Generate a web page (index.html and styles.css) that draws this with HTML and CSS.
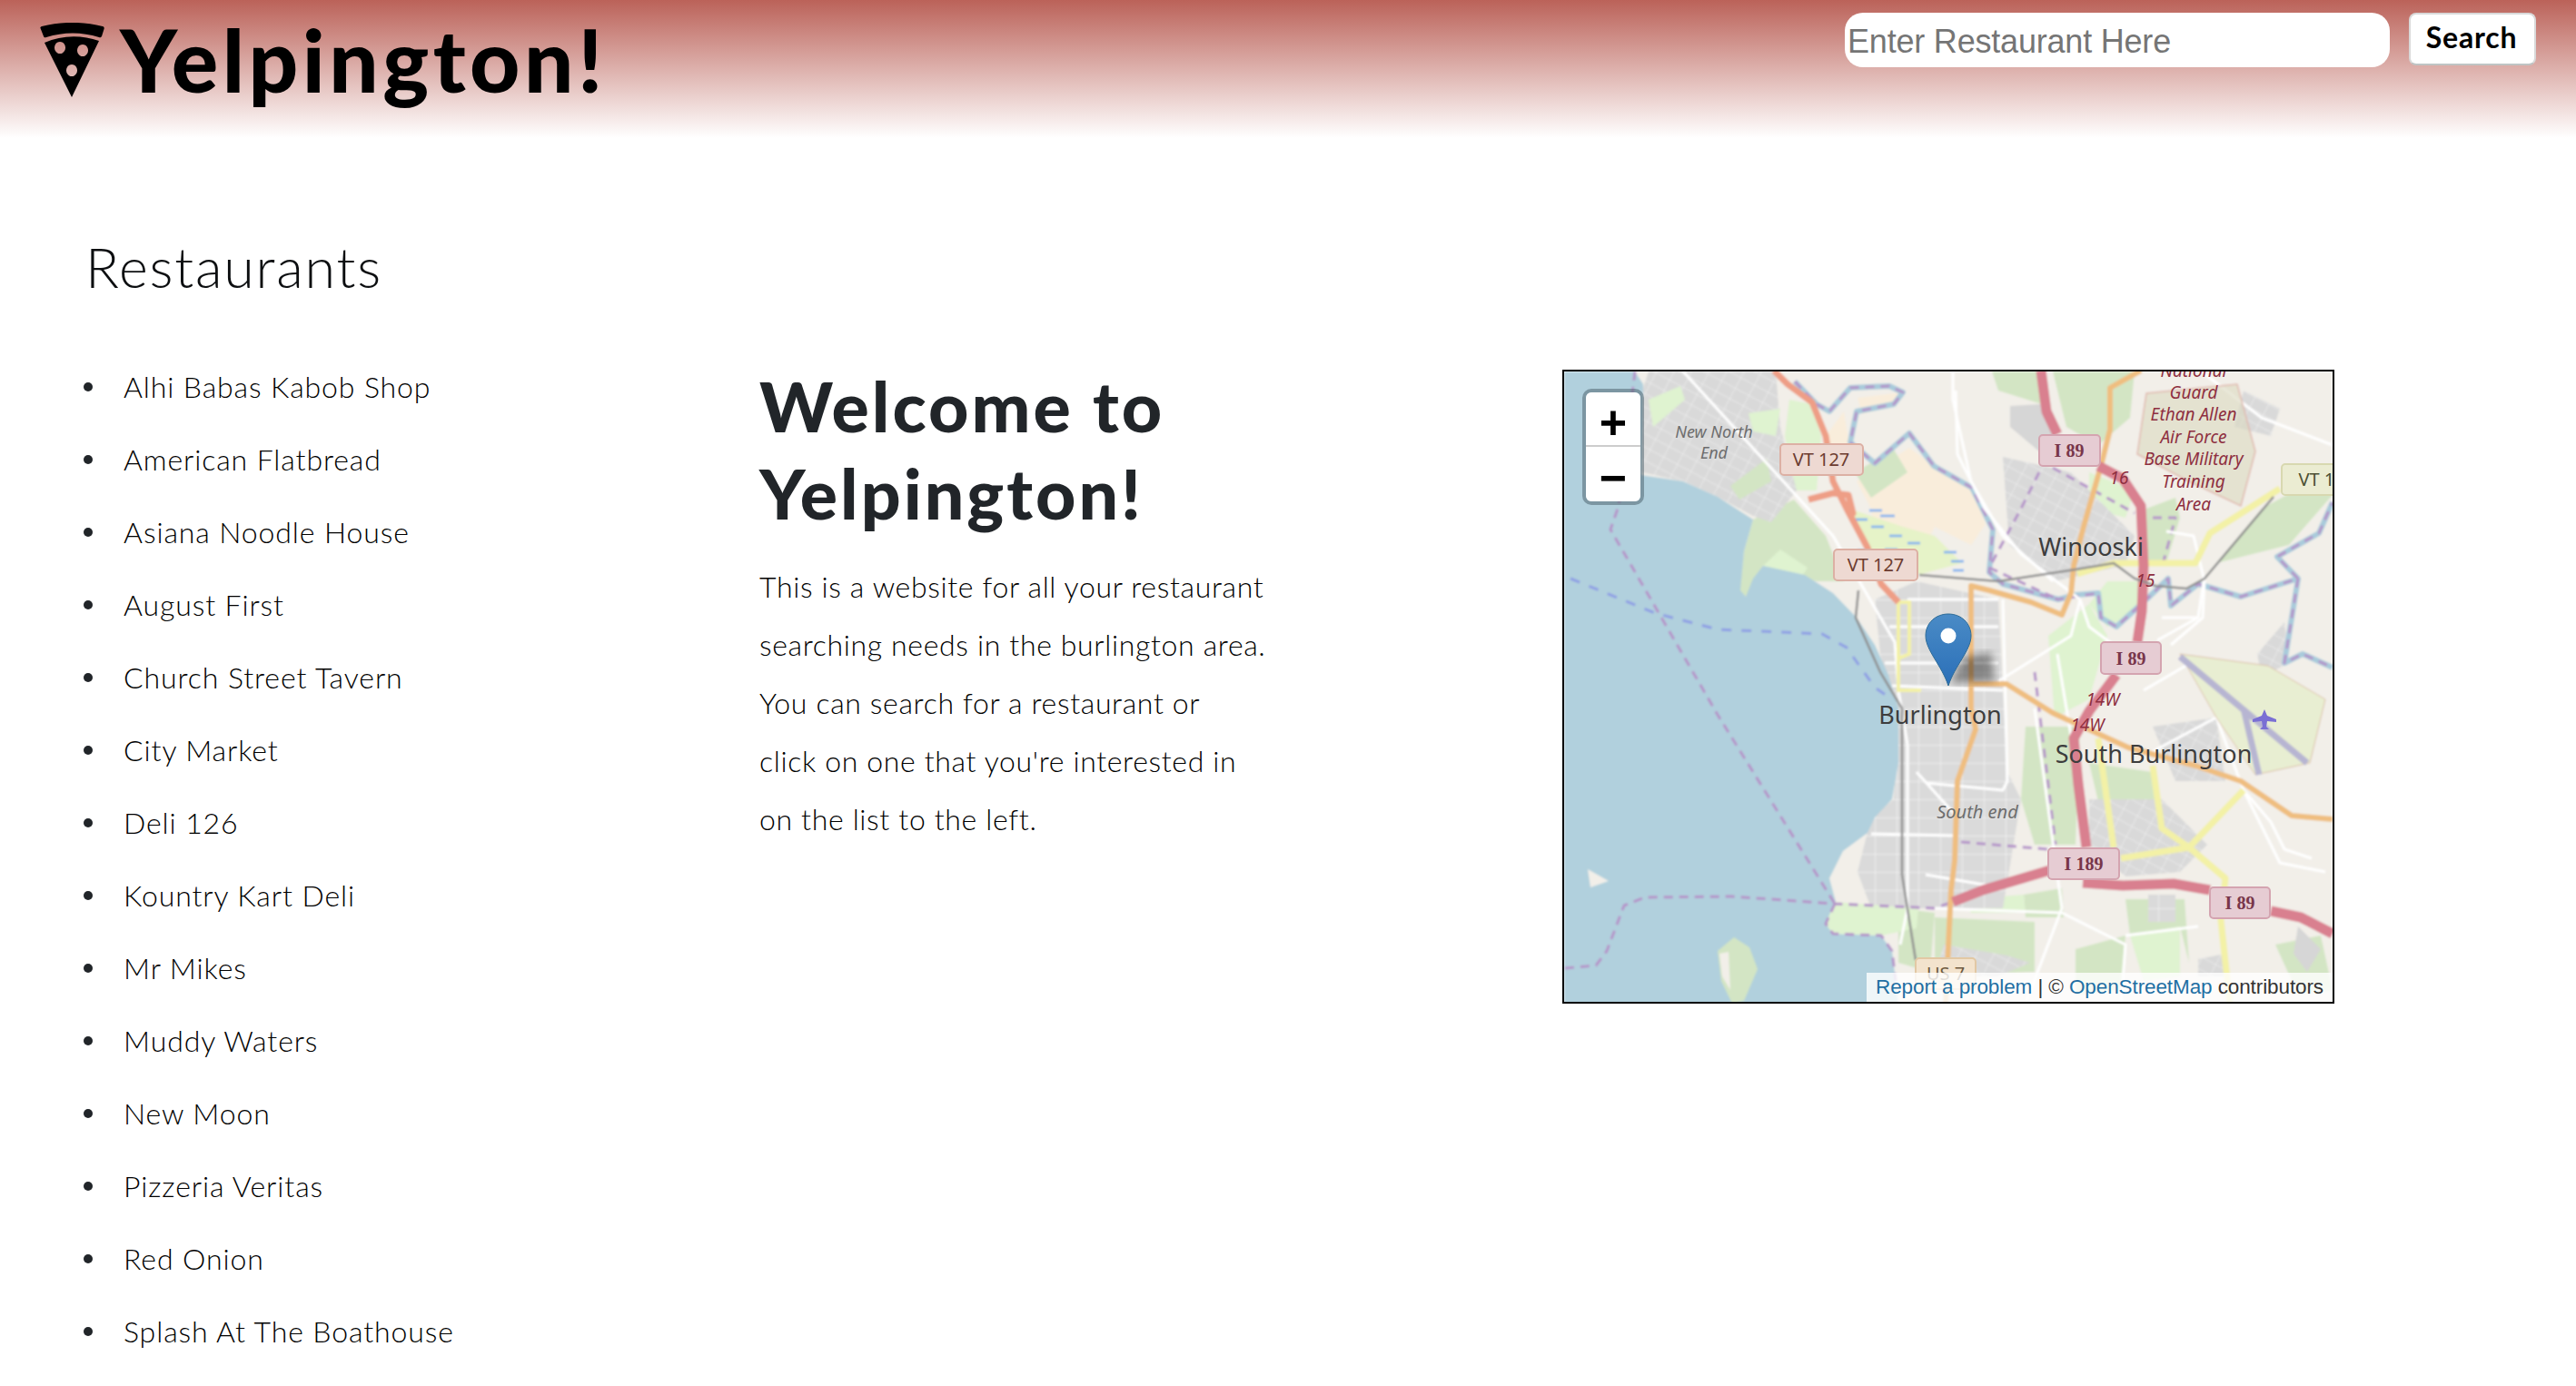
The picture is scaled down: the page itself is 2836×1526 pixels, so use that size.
FILE: index.html
```html
<!DOCTYPE html>
<html lang="en">
<head>
  <meta charset="UTF-8" />
  <title>Yelpington!</title>
  <link rel="stylesheet" href="styles.css">
</head>
<body>

  <header class="topbar">
    <div class="brand">
      <svg class="brand-icon" viewBox="44 25 71 83" aria-hidden="true">
        <path d="M44.500 31 C44 30 45 29.500 46 29 C68 23.500 91 23.500 113 29 C114.500 29.500 115 30.500 114.500 32 L112 40 C111 41.500 110 41.500 109 41 C90 35 70 35 51 41 C49.500 41.500 48.500 41.500 48 40 Z"/>
        <path fill-rule="evenodd" d="M49 47 C68 38.500 90 38.500 109 45 L79 107 Z M66 46 a6 6.500 0 1 0 0.010 0 Z M91 49 a6 6.500 0 1 0 0.010 0 Z M79 71 a6 6.500 0 1 0 0.010 0 Z"/>
      </svg>
      <h1 class="brand-name">Yelpington!</h1>
    </div>
    <form class="search">
      <input class="search-input" type="text" placeholder="Enter Restaurant Here">
      <button class="search-btn" type="button">Search</button>
    </form>
  </header>

  <main class="page">
    <!-- restaurant list -->
    <section class="col-list">
      <h2 class="list-title">Restaurants</h2>
      <ul class="rest-list">
        <li>Alhi Babas Kabob Shop</li>
        <li>American Flatbread</li>
        <li>Asiana Noodle House</li>
        <li>August First</li>
        <li>Church Street Tavern</li>
        <li>City Market</li>
        <li>Deli 126</li>
        <li>Kountry Kart Deli</li>
        <li>Mr Mikes</li>
        <li>Muddy Waters</li>
        <li>New Moon</li>
        <li>Pizzeria Veritas</li>
        <li>Red Onion</li>
        <li>Splash At The Boathouse</li>
      </ul>
    </section>

    <!-- welcome text -->
    <section class="col-welcome">
      <h2 class="welcome-title">Welcome to<br>Yelpington!</h2>
      <p class="welcome-text">This is a website for all your restaurant<br>searching needs in the burlington area.<br>You can search for a restaurant or<br>click on one that you're interested in<br>on the list to the left.</p>
    </section>

    <!-- map -->
    <section class="col-map">
      <div class="map">
        <svg class="map-art" viewBox="1722 409 846 694" aria-hidden="true">
          <defs>
            <filter id="tile"><feGaussianBlur stdDeviation="1"/></filter>
            <filter id="soft"><feGaussianBlur stdDeviation="5"/></filter>
            <linearGradient id="pinFill" x1="0" y1="0" x2="0" y2="1">
              <stop offset="0" stop-color="#4a8bc6"/>
              <stop offset="1" stop-color="#2a6fb8"/>
            </linearGradient>
            <pattern id="blocks" width="17" height="13" patternUnits="userSpaceOnUse" patternTransform="rotate(28)">
              <rect width="17" height="13" fill="#d9d9d9"/>
              <path d="M0 0 H17 M0 0 V13" stroke="#eeeeee" stroke-width="1.500" fill="none"/>
            </pattern>
            <pattern id="grid" width="24" height="20" patternUnits="userSpaceOnUse">
              <rect width="24" height="20" fill="#dadada"/>
              <path d="M0 0 H24 M0 0 V20" stroke="#f4f4f4" stroke-width="1.500" fill="none"/>
            </pattern>
          </defs>

          <g filter="url(#tile)">
            <rect class="land" x="1722" y="409" width="846" height="694"/>

            <!-- farmland and parks -->
            <path class="farm" d="M2044 530 L2102 493 L2129 513 L2171 537 L2186 577 L2170 600 L2130 580 L2100 640 L2070 640 L2060 560 Z"/>
            <path class="farm" d="M2010 480 L2030 453 L2036 490 L2025 522 L2015 505 Z"/>
            <path class="farm" d="M2045 438 L2094 432 L2088 445 L2050 456 Z"/>
            <path class="green" d="M2042 520 L2085 495 L2100 520 L2060 548 Z"/>
            <path class="wet" d="M2036 560 L2095 580 L2130 590 L2160 620 L2115 632 L2080 625 L2056 603 Z"/>
            <path class="pale" d="M1970 440 L1995 445 L2005 480 L2000 540 L1975 540 L1965 480 Z"/>
            <path class="green" d="M1930 572 L1975 550 L2010 590 L2030 640 L2000 640 L1941 623 L1922 657 L1915 650 L1920 607 Z"/>
            <path class="pale" d="M1941 623 L1960 605 L1990 625 L1985 633 Z"/>
            <path class="green" d="M2193 409 L2245 409 L2248 445 L2200 430 Z"/>
            <path class="green" d="M2260 409 L2350 409 L2345 460 L2310 490 L2275 470 Z"/>
            <path class="green" d="M2490 560 L2545 530 L2568 545 L2520 600 L2440 620 Z"/>
            <path class="green" d="M2363 560 L2395 548 L2400 570 L2385 620 L2360 620 Z"/>
            <path class="pale" d="M2320 640 L2360 640 L2360 670 L2320 690 L2300 665 Z"/>
            <path class="pale" d="M2300 520 L2350 540 L2340 570 L2300 560 Z"/>
            <path class="pale" d="M2255 700 L2300 665 L2320 700 L2300 770 L2262 790 Z"/>
            <path class="green" d="M2230 800 L2290 800 L2285 930 L2240 930 L2225 880 Z"/>
            <path class="green" d="M2300 840 L2370 850 L2380 930 L2320 925 Z"/>
            <path class="green" d="M2228 985 L2270 978 L2272 1010 L2230 1010 Z"/>
            <path class="pale" d="M2165 990 L2228 985 L2230 1005 L2170 1005 Z"/>
            <path class="green" d="M2130 1010 L2240 1015 L2240 1070 L2180 1072 L2130 1060 Z"/>
            <path class="green" d="M2285 1045 L2340 1030 L2335 1090 L2285 1095 Z"/>
            <path class="pale" d="M2345 1030 L2400 1020 L2400 1075 L2360 1080 Z"/>
            <path class="green" d="M2340 990 L2405 990 L2410 1060 L2400 1020 L2345 1030 Z"/>
            <path class="green" d="M2090 1000 L2130 1005 L2125 1070 L2090 1060 Z"/>
            <path class="green" d="M2505 1040 L2555 1030 L2568 1090 L2530 1095 Z"/>

            <!-- residential grey -->
            <path class="resid" d="M1815 409 L1955 409 L1960 470 L1978 540 L1950 575 L1930 568 L1891 547 L1853 530 L1808 520 L1808 430 Z"/>
            <path class="solid" d="M2213 447 L2247 445 L2262 480 L2245 497 L2213 470 Z"/>
            <path class="resid" d="M2205 503 L2280 520 L2350 590 L2340 622 L2262 640 L2212 600 Z"/>
            <path class="grid" d="M2064 660 L2110 640 L2200 660 L2205 760 L2210 850 L2225 880 L2205 1000 L2130 1000 L2060 1000 L2045 960 L2060 900 L2085 880 L2090 800 L2070 720 Z"/>
            <path class="resid" d="M2300 880 L2380 880 L2430 930 L2400 960 L2340 965 L2300 930 Z"/>
            <path class="resid" d="M2370 800 L2440 790 L2450 860 L2395 860 Z"/>
            <path class="grid" d="M2365 985 L2395 985 L2395 1015 L2365 1015 Z"/>
            <path class="resid" d="M2140 1040 L2210 1052 L2235 1060 L2200 1075 L2130 1075 Z"/>
            <path class="resid" d="M2420 1056 L2450 1050 L2450 1075 L2420 1075 Z"/>
            <path class="solid" d="M2530 1020 L2555 1045 L2540 1070 L2525 1050 Z"/>
            <path class="resid" d="M2485 720 L2515 685 L2520 730 L2490 745 Z"/>
            <path class="resid" d="M2470 430 L2510 450 L2500 480 L2460 470 Z"/>

            <!-- new north end patches -->
            <path class="pale" d="M1815 440 L1850 425 L1855 440 L1820 470 Z"/>
            <path class="green" d="M1905 535 L1945 505 L1950 530 L1915 550 Z"/>
            <path class="pale" d="M1925 455 L1960 450 L1955 480 L1930 475 Z"/>

            <!-- lake -->
            <path class="lake" d="M1722 409 L1800 409 L1809 423 L1807 523 L1853 530 L1891 547 L1930 572 L1920 607 L1916 650 L1922 657 L1930 637 L1941 623 L1987 633 L2018 653 L2044 680 L2064 710 L2079 743 L2090 780 L2090 840 L2083 880 L2064 900 L2056 917 L2029 937 L2014 967 L2021 993 L2010 1017 L2018 1028 L2071 1030 L2083 1047 L2087 1080 L2090 1105 L1722 1105 Z"/>
            <path class="pale" d="M2020 993 L2112 1000 L2110 1022 L2071 1030 L2018 1028 L2010 1017 Z"/>
            <path class="land" d="M1748 957 L1771 970 L1751 977 Z"/>
            <path class="green" d="M1909 1032 L1891 1047 L1895 1080 L1907 1105 L1920 1102 L1935 1067 L1926 1043 Z"/>
            <path class="land" d="M1893 1050 L1903 1048 L1905 1090 L1896 1075 Z"/>

            <!-- river -->
            <path class="river" d="M1976 420 L2000 445 L2014 453 L2037 427 L2080 425 L2095 432 L2085 445 L2044 453 L2037 487 L2064 510 L2102 477 L2129 513 L2171 537 L2194 583 L2190 630 L2205 643 L2266 660 L2285 655 L2310 653 L2313 680 L2330 690 L2363 660 L2387 637 L2390 667 L2420 643 L2467 657 L2530 637 L2507 613 L2553 587 L2568 553"/>
            <path class="river" d="M2530 637 L2515 730 L2535 720 L2568 735"/>
            <path class="marsh" d="M2040 572 h16 M2058 562 h14 M2070 568 h16 M2060 580 h14 M2080 590 h14 M2075 605 h14 M2100 598 h14 M2045 606 h12 M2140 608 h14 M2148 618 h14 M2150 628 h12"/>

            <!-- boundaries -->
            <path class="bound" d="M1800 409 L1782 557 L1773 583 L1891 787 L2020 995 M1723 1066 L1757 1063 L1769 1047 L1788 997 L1811 988 L1907 987 L2020 995 L2129 1000 L2150 993 M2020 995 L2010 1017 L2018 1028 L2071 1030 L2083 1047 L2087 1080 M2159 927 L2255 935 M2240 740 L2263 930 M2245 520 L2225 560 L2190 625 M2260 515 L2350 565 M2190 625 L2266 660 M2370 570 L2395 570 L2380 625"/>
            <path class="bound" d="M1976 420 L2000 445 L2014 453 L2037 427 L2080 425 L2095 432 L2085 445 L2044 453 L2037 487 L2064 510 L2102 477 L2129 513 L2171 537 L2194 583 L2190 630 L2205 643 L2266 660 L2310 653 L2313 680 L2330 690 L2363 660 L2387 637 L2390 667 L2420 643 L2467 657 L2530 637 L2507 613 L2553 587 L2568 553 M2530 637 L2515 730 L2535 720 L2568 735"/>
            <path class="ferry" d="M1729 637 L1822 675 L1891 693 L2006 698 L2033 713 L2064 757 L2083 770"/>

            <!-- minor roads -->
            <path class="road-w" d="M1853 409 L2018 590 L2086 707 L2090 760 L2100 820 L2100 1000 L2092 1040 M2153 430 L2155 500 L2185 560 L2225 610 L2290 660 M2080 690 L2200 690 M2100 660 L2200 660 M2075 730 L2200 730 M2083 755 L2205 760 M2205 660 L2210 860 L2205 870 L2120 862 M2110 850 L2155 900 M2150 920 L2060 918 M2120 963 L2190 975 M2200 750 L2280 700 L2290 660 M2265 720 L2280 810 M2240 780 L2270 1000 L2230 1105 M2290 660 L2300 690 L2340 720 M2380 680 L2420 680 L2426 640 M2420 680 L2375 705 M2425 410 L2490 460 L2568 490 M2130 1000 L2270 1005 L2340 1040 L2335 1105 M2340 1030 L2420 1020 M2360 760 L2420 725 M2365 830 L2440 790 L2470 870 L2510 950 L2560 960"/>
            <path class="road-w" d="M2150 409 L2150 440 L2170 530 L2205 590 L2260 640 M2385 585 L2415 590 L2427 640 L2425 680 L2390 710 M2470 870 L2500 905 L2515 935 L2545 945"/>

            <!-- airport -->
            <path class="apron" d="M2400 720 L2497 733 L2560 770 L2543 840 L2483 853 L2440 790 Z"/>
            <path class="runway" d="M2400 723 L2540 840 M2470 780 L2487 853"/>
            <path class="mil" d="M2363 433 L2463 423 L2483 497 L2467 557 L2410 530 L2353 500 Z"/>

            <!-- secondary -->
            <path class="sec" d="M2287 632 L2327 620 L2417 620 L2433 587 L2510 538 M2310 813 L2327 933 M2335 945 L2410 933 L2470 870 M2370 843 L2380 912 L2410 933 L2450 967 L2445 1013 L2455 1105"/>
            <path class="sec-thin" d="M2090 663 L2090 760 L2115 760 M2090 663 L2102 663 L2102 720 L2090 725"/>

            <!-- primary -->
            <path class="pri" d="M2357 408 L2323 427 L2323 473 L2313 513 L2293 583 L2283 623 L2280 653 L2270 677 L2236 663 L2190 650 L2170 645 L2170 780 L2175 803 L2155 860 L2152 947 L2148 980 L2142 1105 M2171 753 L2209 753 L2260 785 L2343 823 L2417 843 L2467 860 L2523 898 L2568 902"/>

            <!-- trunk -->
            <path class="trunk" d="M1953 408 L1968 423 L1995 443 L2010 480 L2018 530 L2033 560 L2056 603 L2071 643 L2090 663 M1991 550 L2018 543 L2035 545 L2040 565 L2033 560"/>

            <!-- interstate -->
            <path class="motor" d="M2247 408 L2253 453 L2265 478 M2310 513 L2337 527 L2357 557 L2360 623 L2358 673 L2353 707 M2330 743 L2300 783 L2283 813 L2288 863 L2297 933 M2257 958 L2183 980 L2150 993 M2293 972 L2337 975 L2393 973 L2433 980 M2500 1003 L2533 1010 L2568 1028"/>

            <!-- rail -->
            <path class="rail" d="M2113 633 L2200 640 L2285 627 L2327 620 L2350 637 L2373 645 L2407 648 L2427 637 L2503 547 M2046 650 L2043 680 L2070 740 L2094 780 L2094 963 L2109 1057"/>
          </g>

          <!-- airport plane -->
          <path class="plane" d="M2493 781 L2496 788 L2506 792 L2506 795 L2496 794 L2495 800 L2498 803 L2488 803 L2491 800 L2490 794 L2480 795 L2480 792 L2490 788 Z"/>

          <!-- road shields -->
          <g class="shield-tr"><rect x="1960" y="489" width="91" height="34" rx="4"/><text x="2005" y="513">VT 127</text></g>
          <g class="shield-tr"><rect x="2019" y="605" width="92" height="34" rx="4"/><text x="2065" y="629">VT 127</text></g>
          <g class="shield-mw"><rect x="2245" y="479" width="67" height="34" rx="4"/><text x="2278" y="503">I 89</text></g>
          <g class="shield-mw"><rect x="2313" y="707" width="66" height="35" rx="4"/><text x="2346" y="732">I 89</text></g>
          <g class="shield-mw"><rect x="2255" y="934" width="78" height="34" rx="4"/><text x="2294" y="958">I 189</text></g>
          <g class="shield-mw"><rect x="2433" y="977" width="66" height="34" rx="4"/><text x="2466" y="1001">I 89</text></g>
          <g class="shield-sec"><rect x="2512" y="511" width="80" height="34" rx="4"/><text x="2556" y="535">VT 15</text></g>
          <g class="shield-us"><rect x="2109" y="1055" width="66" height="34" rx="4"/><text x="2142" y="1079">US 7</text></g>

          <!-- place names -->
          <text class="lbl-it lbl-sm" x="1887" y="482">New North</text>
          <text class="lbl-it lbl-sm" x="1887" y="505">End</text>
          <text class="lbl-city" x="2302" y="612">Winooski</text>
          <text class="lbl-city" x="2136" y="797">Burlington</text>
          <text class="lbl-city" x="2371" y="840">South Burlington</text>
          <text class="lbl-it lbl-end" x="2177" y="901">South end</text>

          <text class="lbl-mil" x="2415" y="415">National</text>
          <text class="lbl-mil" x="2415" y="439">Guard</text>
          <text class="lbl-mil" x="2415" y="463">Ethan Allen</text>
          <text class="lbl-mil" x="2415" y="488">Air Force</text>
          <text class="lbl-mil" x="2415" y="512">Base Military</text>
          <text class="lbl-mil" x="2415" y="537">Training</text>
          <text class="lbl-mil" x="2415" y="562">Area</text>

          <text class="lbl-mil" x="2333" y="533">16</text>
          <text class="lbl-mil" x="2362" y="646">15</text>
          <text class="lbl-mil" x="2315" y="777">14W</text>
          <text class="lbl-mil" x="2298" y="805">14W</text>

          <!-- marker -->
          <path class="pin-shadow" d="M2148 752 L2160 724 L2192 718 L2196 750 Z" filter="url(#soft)"/>
          <path class="pin" d="M2145 755 C2138 733 2120 716 2120 700 C2120 686 2131 676 2145 676 C2159 676 2170 686 2170 700 C2170 716 2152 733 2145 755 Z"/>
          <circle class="pin-dot" cx="2145" cy="700" r="8.500"/>
        </svg>

        <div class="zoom-ctl">
          <div class="zoom-btn zoom-in">+</div>
          <div class="zoom-btn zoom-out">&minus;</div>
        </div>

        <div class="attrib"><a>Report a problem</a> | © <a>OpenStreetMap</a> contributors</div>
      </div>
    </section>
  </main>

</body>
</html>
```

FILE: styles.css
```css
html, body {
  margin: 0;
  padding: 0;
  height: 100%;
  overflow: hidden;
  background: #fff;
  color: #212529;
  font-family: "Lato", "Open Sans", sans-serif;
  font-weight: 300;
}

/* header */
.topbar {
  display: flex;
  justify-content: space-between;
  align-items: flex-start;
  height: 152px;
  padding: 0 44px;
  background: linear-gradient(#bb6259, #ffffff);
}

.brand {
  display: flex;
  align-items: flex-start;
  gap: 17px;
  padding-top: 25px;
}

.brand-icon {
  width: 71px;
  height: 83px;
  fill: #000;
}

.brand-name {
  margin: -17px 0 0;
  font-size: 96px;
  line-height: 113px;
  font-weight: 900;
  color: #000;
  letter-spacing: 4.500px;
}

.search {
  display: flex;
  align-items: flex-start;
  gap: 21px;
  padding-top: 14px;
}

.search-input {
  box-sizing: border-box;
  width: 600px;
  height: 60px;
  padding: 4px 3px 0;
  border: none;
  border-radius: 20px;
  background: #fff;
  font-family: "Liberation Sans", sans-serif;
  font-size: 36px;
  letter-spacing: -0.200px;
  outline: none;
}

.search-input::placeholder {
  color: #757575;
}

.search-btn {
  box-sizing: border-box;
  width: 140px;
  height: 58px;
  padding: 0 2px 6px 0;
  border: 2px solid #d9d9d9;
  border-bottom-color: #bfc4c4;
  border-radius: 8px;
  background: #fff;
  color: #000;
  font-family: "Lato", sans-serif;
  font-size: 32px;
  font-weight: 700;
  letter-spacing: 0.800px;
}

/* page columns */
.page {
  display: grid;
  grid-template-columns: 741px 883px 850px;
  padding-left: 94px;
}

.list-title {
  margin: 106px 0 0;
  font-size: 61px;
  line-height: 72px;
  font-weight: 300;
  letter-spacing: 1.800px;
  color: #0c0e10;
}

.rest-list {
  margin: 55px 0 0 -2px;
  padding: 0;
  list-style: none;
}

.rest-list li {
  display: flex;
  align-items: center;
  gap: 34px;
  height: 80px;
  font-size: 32px;
  letter-spacing: 0.900px;
  color: #000;
}

.rest-list li::before {
  content: "";
  width: 10px;
  height: 10px;
  margin-top: 2px;
  border-radius: 50%;
  background: #212529;
}

.col-welcome {
  padding-top: 246px;
  padding-left: 1px;
}

.welcome-title {
  margin: 0;
  font-size: 77px;
  line-height: 96px;
  font-weight: 900;
  letter-spacing: 3px;
}

.welcome-text {
  margin: 24px 0 0;
  font-size: 32px;
  line-height: 64px;
  letter-spacing: 0.650px;
  color: #000;
}

/* map */
.col-map {
  padding-top: 255px;
  margin-left: 2px;
}

.map {
  position: relative;
  box-sizing: border-box;
  width: 850px;
  height: 698px;
  border: 2px solid #000;
  overflow: hidden;
}

.map-art {
  display: block;
  width: 846px;
  height: 694px;
}

.land { fill: #f2efe9; }
.lake { fill: #b1d0dd; }
.farm { fill: #f9eddb; }
.green { fill: #d3e5c4; }
.pale { fill: #dff3d0; }
.wet { fill: #e6f3c8; }
.resid { fill: url(#blocks); }
.grid { fill: url(#grid); }
.solid { fill: #d6d6d6; }
.mil { fill: #dbd9bf; fill-opacity: 0.6; stroke: #e0b8ae; stroke-width: 1.500; }
.apron { fill: #e8eed2; stroke: #dcc0a8; stroke-width: 1; }

.river { fill: none; stroke: #a9cbdb; stroke-width: 6; stroke-linejoin: round; }
.marsh { fill: none; stroke: #79aef0; stroke-width: 2.500; }
.bound { fill: none; stroke: #b594c9; stroke-width: 3; stroke-dasharray: 10 7; stroke-linejoin: round; }
.ferry { fill: none; stroke: #8f9fe4; stroke-width: 3; stroke-dasharray: 11 11; }
.road-w { fill: none; stroke: #fff; stroke-width: 3; stroke-linejoin: round; }
.runway { fill: none; stroke: #b7b5d2; stroke-width: 7; }
.sec { fill: none; stroke: #f3f1a6; stroke-width: 7; stroke-linejoin: round; }
.sec-thin { fill: none; stroke: #f3f1a6; stroke-width: 4; }
.pri { fill: none; stroke: #efbe80; stroke-width: 6; stroke-linejoin: round; }
.trunk { fill: none; stroke: #ee9e86; stroke-width: 7; stroke-linejoin: round; }
.motor { fill: none; stroke: #d9808f; stroke-width: 11; stroke-linejoin: round; }
.rail { fill: none; stroke: #8f8f8f; stroke-width: 2.500; }
.plane { fill: #7a6fd4; }

.map-art text {
  font-family: "Noto Sans", "Open Sans", sans-serif;
  text-anchor: middle;
  font-weight: 400;
}

.shield-tr rect { fill: #eed9d2; stroke: #dcb0a4; stroke-width: 2; }
.shield-tr text { fill: #6c3c30; font-size: 20px; }
.shield-mw rect { fill: #e6ccd3; stroke: #d4a4b0; stroke-width: 2; }
.shield-mw text { fill: #78364a; font-size: 20px; font-family: "Liberation Serif", serif; font-weight: 700; }
.shield-sec rect { fill: #ebecd2; stroke: #d8d8b0; stroke-width: 2; }
.shield-sec text { fill: #4c5034; font-size: 20px; }
.shield-us rect { fill: #f3e3cd; stroke: #e2c8a4; stroke-width: 2; }
.shield-us text { fill: #6d5a40; font-size: 20px; }

.map-art .lbl-city { fill: #3d3d3d; font-size: 27px; }
.map-art .lbl-it { fill: #6d6d6d; font-style: italic; }
.map-art .lbl-sm { font-size: 18px; }
.map-art .lbl-end { font-size: 20px; }
.map-art .lbl-mil { fill: #8e2f40; font-size: 19px; font-style: italic; }

.pin { fill: url(#pinFill); stroke: #2e6c97; stroke-width: 1; }
.pin-dot { fill: #fff; }
.pin-shadow { fill: #000; fill-opacity: 0.4; }

.zoom-ctl {
  position: absolute;
  top: 19px;
  left: 20px;
  width: 60px;
  border: 4px solid rgba(60, 80, 90, 0.45);
  border-radius: 10px;
  background-clip: padding-box;
  overflow: hidden;
}

.zoom-btn {
  display: flex;
  justify-content: center;
  align-items: center;
  height: 60px;
  padding-top: 7px;
  box-sizing: border-box;
  background: #fff;
  color: #000;
  font-family: "Liberation Sans", sans-serif;
  font-size: 52px;
  font-weight: 700;
}

.zoom-in {
  border-bottom: 2px solid #ccc;
}

.attrib {
  position: absolute;
  right: 0;
  bottom: 0;
  padding: 0 10px;
  height: 32px;
  line-height: 32px;
  background: rgba(255, 255, 255, 0.8);
  color: #333;
  font-family: "Liberation Sans", sans-serif;
  font-size: 22.500px;
  letter-spacing: -0.100px;
  white-space: nowrap;
}

.attrib a {
  color: #1f6fa3;
}
```
